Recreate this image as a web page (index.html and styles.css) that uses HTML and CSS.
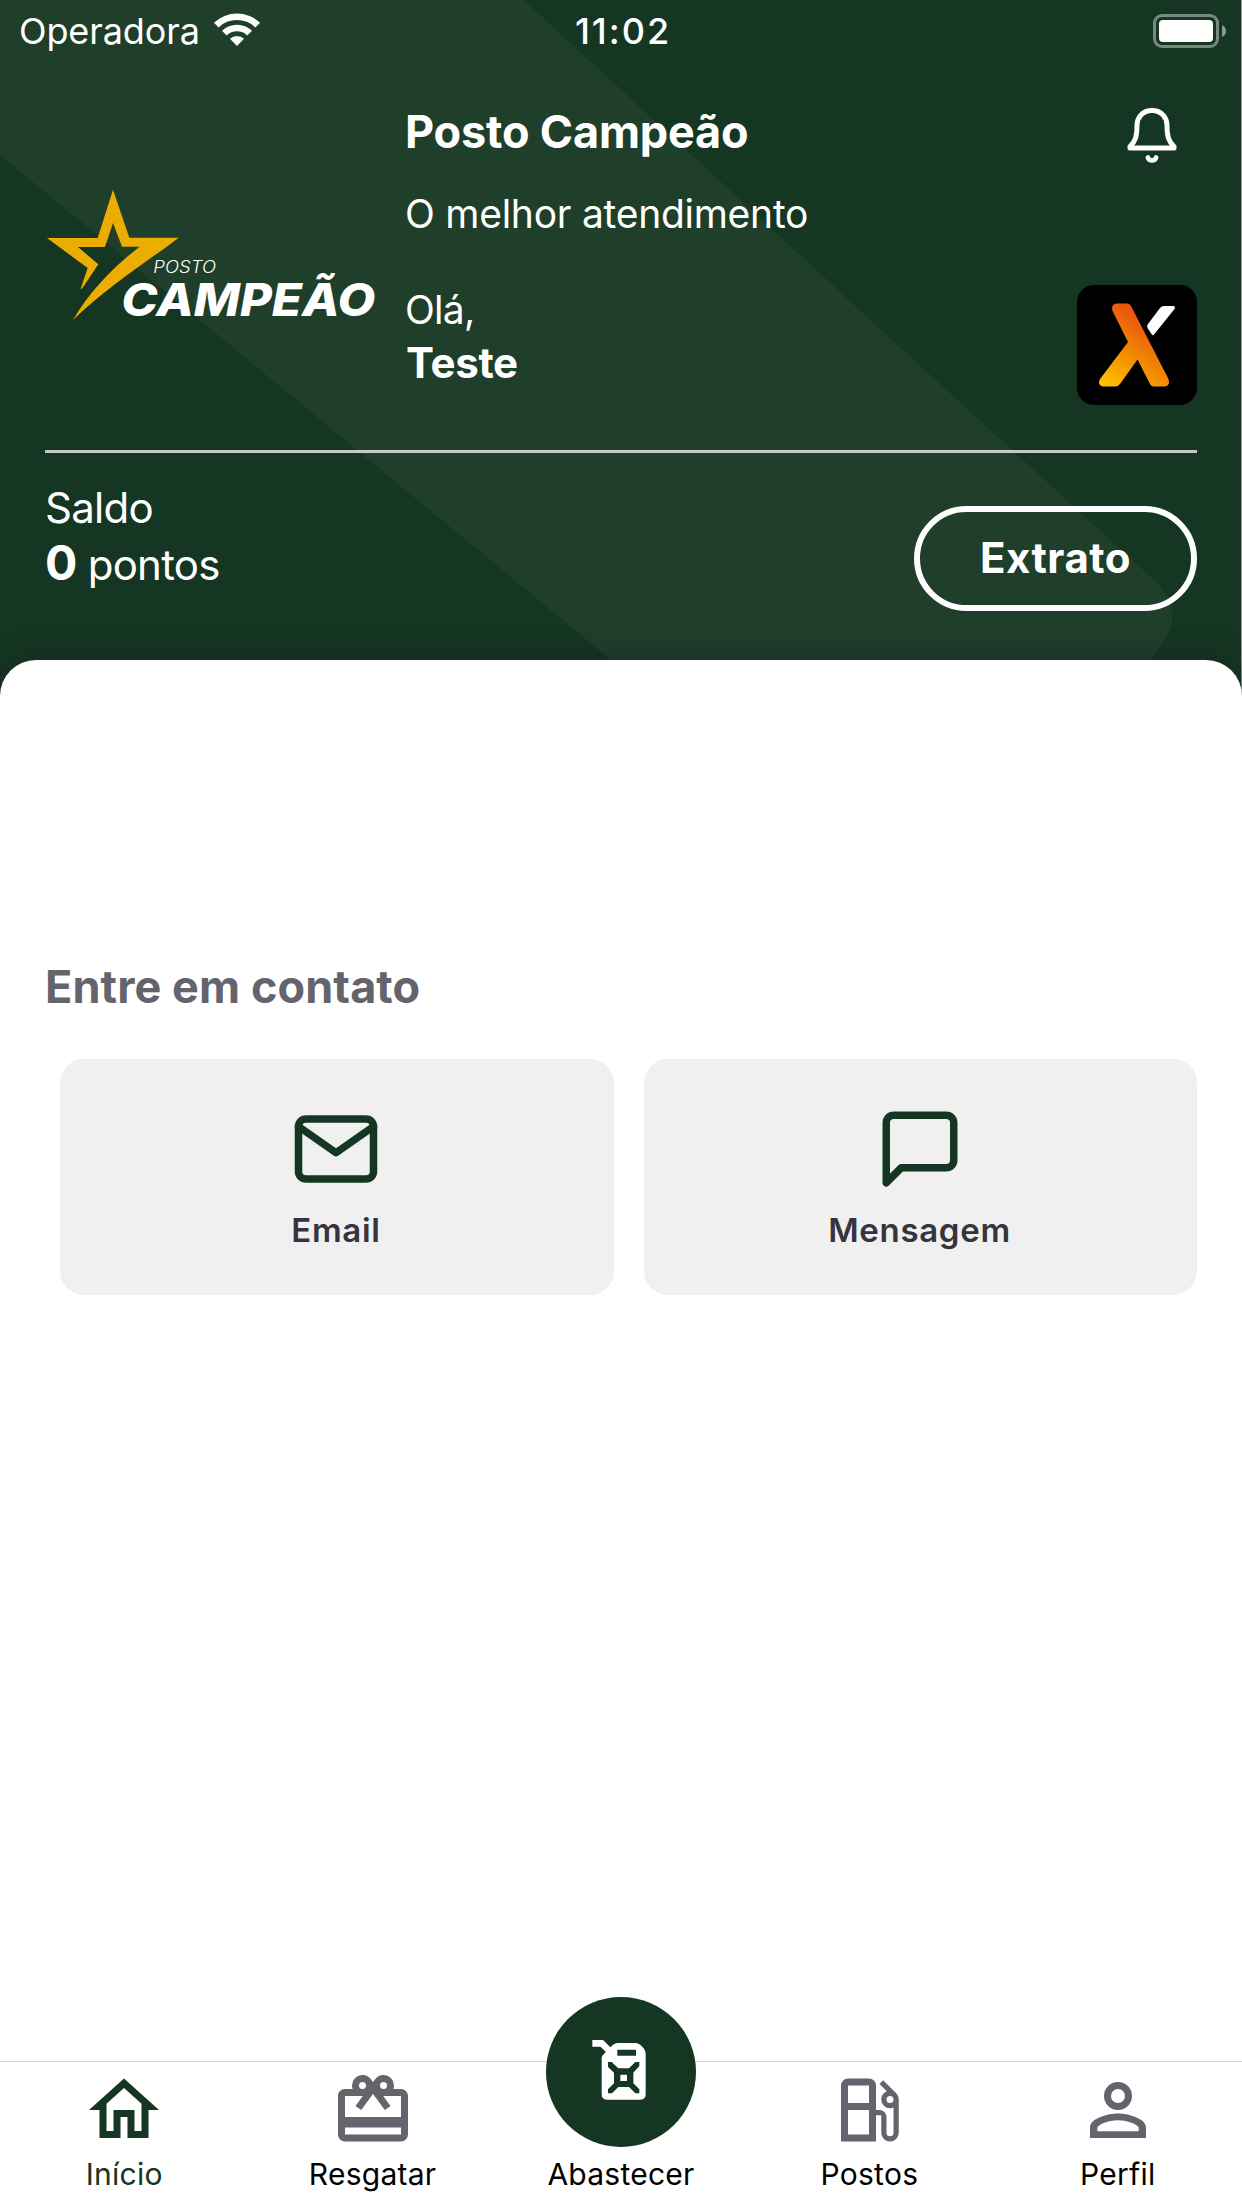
FILE: index.html
```html
<!DOCTYPE html>
<html lang="pt-BR">
<head>
<meta charset="utf-8">
<title>Posto Campeão</title>
<link rel="stylesheet" href="styles.css">
</head>
<body>
<div class="app">
  <header class="header">
    <svg class="header-shape" viewBox="0 0 1241 697" aria-hidden="true">
      <path d="M0 0H524L903 350L1152 578Q1184 608 1166 638L1127 697H656L611 660L236 350L0 155Z" fill="#1f3f2b"/>
    </svg>
    <div class="status">
      <div class="status-left">
        <span class="carrier">Operadora</span>
        <svg class="wifi" viewBox="0 0 46 33" fill="#fff">
          <path d="M0 9.8A33 33 0 0 1 46 9.8L41.4 14.4A26.300 26.300 0 0 0 4.600 14.400Z"/>
          <path d="M8 17.800A21.500 21.500 0 0 1 38 17.800L33.300 22.500A14.800 14.800 0 0 0 12.700 22.500Z"/>
          <path d="M16 25.800A10 10 0 0 1 30 25.800L23 33Z"/>
        </svg>
      </div>
      <span class="clock">11:02</span>
      <svg class="battery" viewBox="0 0 74 34">
        <rect x="1.500" y="1.500" width="63" height="31" rx="7.500" fill="none" stroke="#fff" stroke-opacity=".42" stroke-width="3"/>
        <rect x="6" y="6" width="54" height="22" rx="4" fill="#fff"/>
        <path d="M69 11Q73 13 73 17T69 23Z" fill="#fff" fill-opacity=".5"/>
      </svg>
    </div>
    <div class="brand">
      <svg class="logo" viewBox="15 27 990 396">
        <path fill="#ebad00" d="M219 29L268 173H416C340 232 200 320 99 420C150 330 235 248 299 200H246L219 129L195 201H114L175 253L126 326H122L143 264L21 174H173Z"/>
        <text class="logo-small" x="340" y="280" textLength="188" lengthAdjust="spacingAndGlyphs">POSTO</text>
        <text class="logo-big" x="244" y="408" textLength="762" lengthAdjust="spacingAndGlyphs">CAMPEÃO</text>
      </svg>
      <div class="brand-text">
        <h1 class="brand-name">Posto Campeão</h1>
        <p class="brand-tagline">O melhor atendimento</p>
        <p class="greeting">Olá,</p>
        <p class="user">Teste</p>
      </div>
      <div class="brand-side">
        <svg class="bell" viewBox="1107 90 90 90" fill="none" stroke="#fff" stroke-linecap="round" stroke-linejoin="round">
          <path stroke-width="5" d="M1152 110.500C1142 110.500 1137.300 118 1137 125C1137 137 1135 142 1130 146.500V148H1174V146.500C1169 142 1167 137 1167 125C1166.700 118 1162 110.500 1152 110.500Z"/>
          <path stroke-width="4.600" d="M1147.800 157.500C1149.500 161.500 1154.500 161.500 1156.200 157.500"/>
        </svg>
        <svg class="partner" viewBox="1077 285 120 120">
          <defs>
            <linearGradient id="flame" gradientUnits="userSpaceOnUse" x1="1100" y1="384" x2="1145" y2="322">
              <stop offset="0" stop-color="#ffc400"/><stop offset=".55" stop-color="#f28a00"/><stop offset="1" stop-color="#ea5610"/>
            </linearGradient>
          </defs>
          <rect x="1077" y="285" width="120" height="120" rx="17"/>
          <path fill="url(#flame)" d="M1116 303.500H1127Q1130 303.500 1131 306L1168.500 379Q1170.500 386 1165 386.500H1154Q1151 386.500 1150 384L1137.500 359.500L1120 384Q1118 386.500 1115 386.500H1103Q1097 385 1100 379L1128 342L1112.500 311Q1110.500 305 1116 303.500Z"/>
          <path fill="#fff" d="M1164 306H1173Q1176 306 1174.500 309L1154 334.500Q1152.500 336 1151.500 334L1147.500 328Q1146.500 326 1148 324L1160 308Q1161.500 306 1164 306Z"/>
        </svg>
      </div>
    </div>
    <div class="balance">
      <div class="balance-text">
        <p class="balance-label">Saldo</p>
        <p class="balance-value"><strong>0</strong> <span>pontos</span></p>
      </div>
      <button class="statement" type="button">Extrato</button>
    </div>
  </header>
  <main class="sheet">
    <h2 class="section-title">Entre em contato</h2>
    <div class="cards">
      <a class="card">
        <svg class="card-icon" viewBox="0 0 24 24"><path d="M4 4h16c1.100 0 2 .9 2 2v12c0 1.100-.9 2-2 2H4c-1.100 0-2-.9-2-2V6c0-1.100.9-2 2-2z"/><path d="M22 6l-10 7L2 6"/></svg>
        <span class="card-label">Email</span>
      </a>
      <a class="card">
        <svg class="card-icon" viewBox="0 0 24 24"><path d="M21 15a2 2 0 0 1-2 2H7l-4 4V5a2 2 0 0 1 2-2h14a2 2 0 0 1 2 2z"/></svg>
        <span class="card-label">Mensagem</span>
      </a>
    </div>
  </main>
  <nav class="tabs">
    <a class="tab tab-active">
      <svg class="tab-icon" viewBox="0 0 24 24"><path d="M12 5.690L17 10.190V18H15V12H9V18H7V10.190L12 5.690M12 3L2 12H5V20H11V14H13V20H19V12H22"/></svg>
      <span class="tab-label">Início</span>
    </a>
    <a class="tab">
      <svg class="tab-icon" viewBox="0 0 24 24"><path d="M20,14H4V8H9.080L7,10.830L8.620,12L11,8.760L12,7.400L13,8.760L15.380,12L17,10.830L14.920,8H20M20,19H4V17H20M9,4A1,1 0 0,1 10,5A1,1 0 0,1 9,6A1,1 0 0,1 8,5A1,1 0 0,1 9,4M15,4A1,1 0 0,1 16,5A1,1 0 0,1 15,6A1,1 0 0,1 14,5A1,1 0 0,1 15,4M20,6H17.820C17.930,5.690 18,5.350 18,5A3,3 0 0,0 15,2C13.950,2 13.040,2.540 12.500,3.350L12,4L11.500,3.340C10.960,2.540 10.050,2 9,2A3,3 0 0,0 6,5C6,5.350 6.070,5.690 6.180,6H4C2.890,6 2,6.890 2,8V19A2,2 0 0,0 4,21H20A2,2 0 0,0 22,19V8C22,6.890 21.100,6 20,6Z"/></svg>
      <span class="tab-label">Resgatar</span>
    </a>
    <a class="tab">
      <span class="fab">
        <svg class="fab-icon" viewBox="330 175 175 190">
          <path fill="#fff" fill-rule="evenodd" d="M337 181H369L391 203Q403 190 414 190H467C478 190 497 208 497 220V344Q497 360 481 360H381Q365 360 365 344V235Q365 228 378 217L361 201H337ZM412 210V228H468V210ZM384 247V262L402 279V311L384 329V341H396L415 322H447L466 341H478V329L460 311V279L478 259V247H466L447 266H415L395 247ZM421 285H441V304H421Z"/>
        </svg>
      </span>
      <span class="tab-label">Abastecer</span>
    </a>
    <a class="tab">
      <svg class="tab-icon" viewBox="0 0 24 24"><path d="M19.770,7.230L19.780,7.220L16.060,3.500L15,4.560L17.110,6.670C16.170,7.030 15.500,7.930 15.500,9A2.500,2.500 0 0,0 18,11.500C18.360,11.500 18.690,11.420 19,11.290V18.500A1,1 0 0,1 18,19.500A1,1 0 0,1 17,18.500V14A2,2 0 0,0 15,12H14V5A2,2 0 0,0 12,3H6A2,2 0 0,0 4,5V21H14V13.500H15.500V18.500A2.500,2.500 0 0,0 18,21A2.500,2.500 0 0,0 20.500,18.500V9C20.500,8.310 20.220,7.680 19.770,7.230M12,13.500V19H6V12H12V13.500M12,10H6V5H12V10M18,10A1,1 0 0,1 17,9A1,1 0 0,1 18,8A1,1 0 0,1 19,9A1,1 0 0,1 18,10Z"/></svg>
      <span class="tab-label">Postos</span>
    </a>
    <a class="tab">
      <svg class="tab-icon" viewBox="0 0 24 24"><path d="M12,4A4,4 0 0,1 16,8A4,4 0 0,1 12,12A4,4 0 0,1 8,8A4,4 0 0,1 12,4M12,6A2,2 0 0,0 10,8A2,2 0 0,0 12,10A2,2 0 0,0 14,8A2,2 0 0,0 12,6M12,13C14.670,13 20,14.330 20,17V20H4V17C4,14.330 9.330,13 12,13M12,14.900C9.030,14.900 6.100,16.360 6.100,17V18.100H17.900V17C17.900,16.360 14.970,14.900 12,14.900Z"/></svg>
      <span class="tab-label">Perfil</span>
    </a>
  </nav>
</div>
</body>
</html>
```
FILE: styles.css
```css
* { box-sizing: border-box; }
body { margin: 0; background: #fff; font-family: Inter, "Liberation Sans", sans-serif; }
h1, h2, p { margin: 0; }
svg { display: block; flex: none; }
.app { width: 1242px; height: 2208px; display: flex; flex-direction: column; overflow: hidden; position: relative; }

.header { position: relative; height: 697px; flex: none; padding: 0 44px 0 45px; background: #143622; color: #fff; border-right: 1px solid #8f9c94; }
.header-shape { position: absolute; left: 0; top: 0; width: 1241px; height: 697px; }
.status, .brand, .balance { position: relative; }

.status { height: 62px; margin: 0 -44px 0 -45px; padding: 0 14px 0 19px; display: grid; grid-template-columns: 1fr auto 1fr; align-items: center; font-size: 36px; line-height: 62px; }
.status-left { display: flex; align-items: center; gap: 14px; }
.carrier { letter-spacing: -.1px; }
.wifi { width: 46px; height: 33px; margin-bottom: 3px; }
.clock { font-weight: 500; letter-spacing: 2px; }
.battery { width: 74px; height: 34px; justify-self: end; }

.brand { height: 391px; display: flex; border-bottom: 3px solid #c8c8c8; }
.logo { width: 330px; height: 132px; margin-top: 127px; overflow: visible; }
.logo text { fill: #fff; font-style: italic; }
.logo-small { font-size: 51px; font-weight: 300; }
.logo-big { font-size: 135px; font-weight: 800; }
.brand-text { flex: 1; padding: 43px 0 0 30px; }
.brand-name { font-size: 45px; line-height: 54px; font-weight: 700; letter-spacing: -.17px; }
.brand-tagline { margin-top: 30px; font-size: 39px; line-height: 50px; letter-spacing: -.26px; }
.greeting { margin-top: 46px; font-size: 39px; line-height: 50px; letter-spacing: -.7px; }
.user { margin: 2px 0 0 1px; font-size: 42px; line-height: 52px; font-weight: 700; letter-spacing: -.3px; }
.brand-side { padding-top: 28px; display: flex; flex-direction: column; align-items: flex-end; gap: 105px; }
.bell { width: 90px; height: 90px; }
.partner { width: 120px; height: 120px; }

.balance { display: flex; justify-content: space-between; align-items: flex-start; }
.balance-text { padding-top: 27px; font-size: 42px; line-height: 56px; letter-spacing: -.75px; }
.balance-value { margin-top: 1px; }
.balance-value strong { font-size: 48px; line-height: 0; font-weight: 700; }
.statement { margin-top: 53px; width: 283px; height: 105px; padding: 0 0 3px; border: 6px solid #fff; border-radius: 53px; background: none; color: #fff; font: 700 42px Inter, "Liberation Sans", sans-serif; letter-spacing: .5px; }

.sheet { position: relative; flex: 1; margin-top: -37px; padding: 300px 45px 0; background: #fff; border-radius: 36px 36px 0 0; box-shadow: 0 0 28px rgba(30, 30, 30, .6); }
.section-title { font-size: 45px; line-height: 54px; font-weight: 700; letter-spacing: .1px; color: #64646c; }
.cards { margin: 45px 0 0 15px; display: flex; gap: 30px; }
.card { flex: 1; height: 236px; padding: 45px 1.5px 0 0; display: flex; flex-direction: column; align-items: center; gap: 16px; background: #f0f0f0; border-radius: 24px; }
.card-icon { width: 90px; height: 90px; fill: none; stroke: #143622; stroke-width: 2; stroke-linecap: round; stroke-linejoin: round; }
.card-label { font-size: 33px; line-height: 40px; font-weight: 600; letter-spacing: .7px; color: #36343f; }

.tabs { position: relative; flex: none; height: 147px; display: grid; grid-template-columns: repeat(5, 1fr); border-top: 1px solid #d4d4d6; background: #fff; }
.tab { position: relative; padding: 5.5px 0 16px; display: flex; flex-direction: column; justify-content: space-between; align-items: center; color: #000; }
.tab-icon { width: 84px; height: 84px; fill: #64646c; }
.tab-label { margin-top: auto; font-size: 30px; line-height: 36px; letter-spacing: .25px; }
.tab-active { color: #143622; }
.tab-active .tab-icon { fill: #143622; }
.fab { position: absolute; top: -65px; left: 49.2px; width: 150px; height: 150px; padding: 41.3px 0 0 44px; border-radius: 50%; background: #143622; }
.fab-icon { width: 58.33px; height: 63.33px; }
```
